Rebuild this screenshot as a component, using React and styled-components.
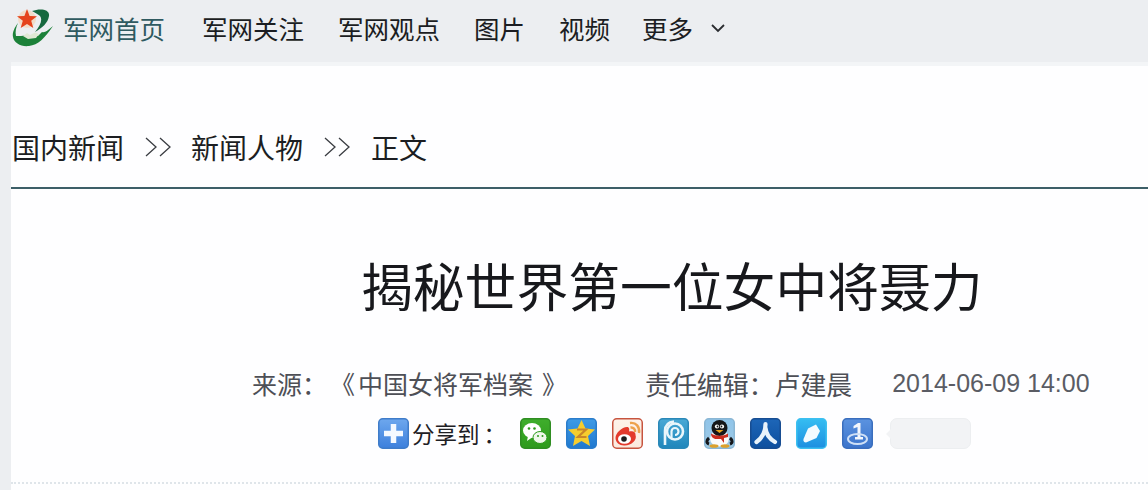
import React from "react";
import styled, { createGlobalStyle } from "styled-components";

const Global = createGlobalStyle`
  html, body { margin: 0; padding: 0; background: #eceef1; }
  body { font-family: "Liberation Sans", "Noto Sans CJK SC", sans-serif; }
`;

const Page = styled.div`
  width: 1148px;
  height: 490px;
  overflow: hidden;
  background: #eceef1;
  display: flex;
  flex-direction: column;
`;

const TopBar = styled.nav`
  height: 62px;
  flex: none;
  box-sizing: border-box;
  display: flex;
  align-items: center;
  padding: 0 0 6px 12px;
`;

const Logo = styled.svg`
  width: 42px;
  height: 38px;
  flex: none;
  margin-right: 9px;
`;

const NavLink = styled.span`
  font-family: "Noto Sans CJK SC", sans-serif;
  font-size: 25.5px;
  line-height: 36px;
  color: ${(p) => (p.$home ? "#2f5a60" : "#1b1d22")};
  margin-right: ${(p) => p.$gap}px;
  white-space: nowrap;
  display: flex;
  align-items: center;
  gap: 18px;
`;

const Content = styled.main`
  flex: 1;
  margin-left: 11px;
  background: #fefeff;
  border-top: 4px solid #f3f5f7;
  display: flex;
  flex-direction: column;
  min-height: 0;
`;

const Crumbs = styled.div`
  height: 123px;
  flex: none;
  box-sizing: border-box;
  padding: 60px 0 0 1px;
  border-bottom: 2px solid #3d5f68;
  display: flex;
  align-items: flex-start;
  font-family: "Noto Sans CJK SC", sans-serif;
  font-size: 28px;
  line-height: 42px;
  color: #1c1e22;
`;

const Sep = styled.span`
  width: 27px;
  height: 42px;
  margin: 0 ${(p) => p.$after}px 0 21px;
  display: flex;
  align-items: center;
`;

const Title = styled.h1`
  margin: 59px 0 0;
  padding-left: 350px;
  font-family: "Noto Sans CJK SC", sans-serif;
  font-size: 51.8px;
  line-height: 74px;
  font-weight: 400;
  color: #17181c;
  white-space: nowrap;
`;

const Meta = styled.div`
  margin-top: 43px;
  padding-left: 241px;
  display: flex;
  align-items: center;
  height: 36px;
  font-family: "Noto Sans CJK SC", sans-serif;
  font-size: 25px;
  color: #4d4f56;
  white-space: nowrap;
`;

const MetaItem = styled.span`
  margin-right: ${(p) => p.$gap || 0}px;
  font-size: ${(p) => p.$size || 25}px;
`;

const DateText = styled.span`
  font-family: "Liberation Sans", sans-serif;
  font-size: 25px;
  color: #5a5c64;
  padding-top: 1px;
`;

const Mark = styled.span`
  display: inline-block;
  margin: 0 ${(p) => p.$right}px 0 ${(p) => p.$left}px;
`;

const Share = styled.div`
  margin-top: 16px;
  padding-left: 367px;
  height: 32px;
  display: flex;
  align-items: center;
`;

const ShareLabel = styled.span`
  font-family: "Noto Sans CJK SC", sans-serif;
  font-size: 22.5px;
  color: #1e2024;
  width: 111px;
  padding-left: 3px;
  box-sizing: border-box;
  flex: none;
  white-space: nowrap;
`;

const IconList = styled.div`
  display: flex;
  gap: 15px;
`;

const Tile = styled.svg`
  width: 31px;
  height: 31px;
  flex: none;
  display: block;
`;

const Bubble = styled.div`
  position: relative;
  width: 81px;
  height: 31px;
  margin-left: 17px;
  background: #f2f3f5;
  border: 1px solid #eceef0;
  box-sizing: border-box;
  border-radius: 7px;
  &::before {
    content: "";
    position: absolute;
    left: -5px;
    top: 10px;
    border-style: solid;
    border-width: 5px 5px 5px 0;
    border-color: transparent #f2f3f5 transparent transparent;
  }
`;

const Dotted = styled.div`
  margin-top: 33px;
  border-top: 2px dotted #dfe5ea;
`;

const Frame = ({ a, b, stroke, id, children }) => (
  <Tile viewBox="0 0 31 31">
    <defs>
      <linearGradient id={id} x1="0" y1="0" x2="0" y2="1">
        <stop offset="0" stopColor={a} />
        <stop offset="1" stopColor={b} />
      </linearGradient>
    </defs>
    <rect x="0.75" y="0.75" width="29.5" height="29.5" rx="4" fill={`url(#${id})`} stroke={stroke} strokeWidth="1.5" />
    {children}
  </Tile>
);

const Chevrons = ({ after }) => (
  <Sep $after={after}>
    <svg width="27" height="20" viewBox="0 0 27 20" fill="none" stroke="#3a3d42" strokeWidth="1.3">
      <path d="M1 1 L11 10 L1 19 M15 1 L25 10 L15 19" />
    </svg>
  </Sep>
);

export default function App() {
  return (
    <Page>
      <Global />
      <TopBar>
        <Logo viewBox="0 0 42 38">
          <path d="M20 2 C28 -1 38 0 37 7 C36 14 30 19 23 23 C28 17 31 11 28 7 C26 5 23 4 20 2Z" fill="#17693f" />
          <path d="M6 14 C3 18 0 23 1 28 C2 34 9 38 17 37 C26 36 33 29 41 17 C36 21 33 24 30 23 L26 27 L18 26 L9 27 L4 27 C3 23 4 18 6 14Z" fill="#1c8139" />
          <path d="M11 27 L15 24 L18 26 L23 23.500 L27 25 L24 29 L16 30Z" fill="#dfe8d4" />
          <circle cx="15" cy="10" r="9" fill="#f5c9a0" opacity="0.5" />
          <polygon points="15,0 17.600,7 25,7.300 19.200,11.800 21.300,19 15,15 8.700,19 10.800,11.800 5,7.300 12.400,7" fill="#e5431b" />
        </Logo>
        <NavLink $home $gap={37}>军网首页</NavLink>
        <NavLink $gap={34}>军网关注</NavLink>
        <NavLink $gap={34}>军网观点</NavLink>
        <NavLink $gap={34}>图片</NavLink>
        <NavLink $gap={32}>视频</NavLink>
        <NavLink $gap={0}>
          更多
          <svg width="14" height="9" viewBox="0 0 14 9" fill="none" stroke="#2a2c30" strokeWidth="1.8">
            <path d="M1 1 L7 7 L13 1" />
          </svg>
        </NavLink>
      </TopBar>
      <Content>
        <Crumbs>
          <span>国内新闻</span>
          <Chevrons after={19} />
          <span>新闻人物</span>
          <Chevrons after={20} />
          <span>正文</span>
        </Crumbs>
        <Title>揭秘世界第一位女中将聂力</Title>
        <Meta>
          <MetaItem $gap={6}>来源：</MetaItem>
          <MetaItem $gap={78}>
            <Mark $left={-3} $right={3}>《</Mark>中国女将军档案<Mark $left={9} $right={0}>》</Mark>
          </MetaItem>
          <MetaItem $gap={40} $size={25.9}>责任编辑：卢建晨</MetaItem>
          <DateText>2014-06-09 14:00</DateText>
        </Meta>
        <Share>
          <Frame id="g0" a="#6ea8ee" b="#3c7fdc" stroke="#3f7cc9">
            <path d="M15.500 6 V25 M6 15.500 H25" stroke="#f4f9ff" strokeWidth="5.500" />
          </Frame>
          <ShareLabel>分享到<Mark $left={4} $right={0}>：</Mark></ShareLabel>
          <IconList>
            <Frame id="g1" a="#3fae2c" b="#2d9a1c" stroke="#2f8d22">
              <ellipse cx="12" cy="12.500" rx="9" ry="7.500" fill="#fff" />
              <path d="M8 18 L7 23 L12 19.500Z" fill="#fff" />
              <ellipse cx="20" cy="19.500" rx="7" ry="6" fill="#eef7ea" stroke="#2d9a1c" />
              <circle cx="9" cy="10.500" r="1.300" fill="#2d9a1c" />
              <circle cx="14.500" cy="10.500" r="1.300" fill="#2d9a1c" />
              <circle cx="18" cy="18" r="1" fill="#2d9a1c" />
              <circle cx="22.500" cy="18" r="1" fill="#2d9a1c" />
            </Frame>
            <Frame id="g2" a="#3f9be6" b="#1f78cf" stroke="#2a7ccb">
              <polygon points="15.500,2 19.500,10.500 29,11.500 22,18 24,28 15.500,23 7,28 9,18 2,11.500 11.500,10.500" fill="#f6cd2e" />
              <path d="M11 11.500 H20 L12 19 H20.500" fill="none" stroke="#c8862a" strokeWidth="2.200" />
            </Frame>
            <Frame id="g3" a="#fdf3ea" b="#fbe9de" stroke="#c7543f">
              <path d="M3.500 20 C3.500 15 10 9 15 9 C17.500 9 17.500 11.500 17 13.500 C20.500 12.500 24 14 23.500 17 C25.500 22 19 28 12 27.500 C7.500 27.500 3.500 24.500 3.500 20Z" fill="#e33a2c" />
              <ellipse cx="12.500" cy="21" rx="6.500" ry="4.800" fill="#fff" />
              <circle cx="12" cy="21" r="2.800" fill="#1c1c1c" />
              <path d="M18 5 C24 4 28 9 27 15 M18.500 9.500 C21.500 9 23.500 11.500 23 14" fill="none" stroke="#eda24c" strokeWidth="2.400" />
            </Frame>
            <Frame id="g4" a="#4aa9d6" b="#1f86bb" stroke="#2a88b8">
              <circle cx="17" cy="13.500" r="8" fill="none" stroke="#eaf6fb" strokeWidth="2.600" />
              <path d="M7 27 L7 13 C7 7 11 4 16 3.500" fill="none" stroke="#eaf6fb" strokeWidth="2.600" />
              <path d="M13.500 21 L13.500 13.500 A3.500 3.500 0 1 1 17 17" fill="none" stroke="#eaf6fb" strokeWidth="2.200" />
            </Frame>
            <Frame id="g5" a="#8fc4ea" b="#9ec9e4" stroke="#8ab6d4">
              <ellipse cx="15.500" cy="20.500" rx="9.500" ry="8" fill="#fbfbfb" />
              <ellipse cx="15.500" cy="10" rx="8" ry="8" fill="#15161a" />
              <path d="M5 20 C2.500 22 2 25 5 26 M26 20 C28.500 22 29 25 26 26" stroke="#15161a" strokeWidth="3" fill="none" />
              <circle cx="13" cy="8.500" r="2.100" fill="#fff" />
              <circle cx="18" cy="8.500" r="2.100" fill="#fff" />
              <circle cx="13.500" cy="8.500" r="0.900" fill="#15161a" />
              <circle cx="17.500" cy="8.500" r="0.900" fill="#15161a" />
              <path d="M11.500 12 H19.500 L15.500 15Z" fill="#e8a31e" />
              <path d="M7 15.500 C12 18.500 19 18.500 24 15.500 L24 19 L20 20 L20 25 L17 21 H11 C9 20 7 19 7 15.500Z" fill="#c92c1f" />
              <ellipse cx="10" cy="28" rx="4.500" ry="1.800" fill="#dca12c" />
              <ellipse cx="21" cy="28" rx="4.500" ry="1.800" fill="#dca12c" />
            </Frame>
            <Frame id="g6" a="#1d66b8" b="#0e4f9e" stroke="#174d92">
              <path d="M15.500 6 C15.500 14 12 20 6.500 24 M15.500 10 C16 16 20 21 25 24" fill="none" stroke="#e9f3fb" strokeWidth="4.200" strokeLinecap="round" />
            </Frame>
            <Frame id="g7" a="#35bdf2" b="#1d8fe0" stroke="#3cc0f0">
              <path d="M7.500 21 L12 10.500 L20 6.500 L24 13 L20.500 20 L10 24.500 C8 24.500 7 23 7.500 21Z" fill="#f3fbff" />
            </Frame>
            <Frame id="g8" a="#5b93e0" b="#3c74cb" stroke="#3a6ebd">
              <path d="M11.500 8 L16 5 H18.500 V19 H21 V21.500 H13 V19 H15.500 V9 L11.500 10.500Z" fill="#f4f8fd" />
              <ellipse cx="15.500" cy="21" rx="9.500" ry="5" fill="none" stroke="#cfe0f6" strokeWidth="2" />
            </Frame>
          </IconList>
          <Bubble />
        </Share>
        <Dotted />
      </Content>
    </Page>
  );
}
